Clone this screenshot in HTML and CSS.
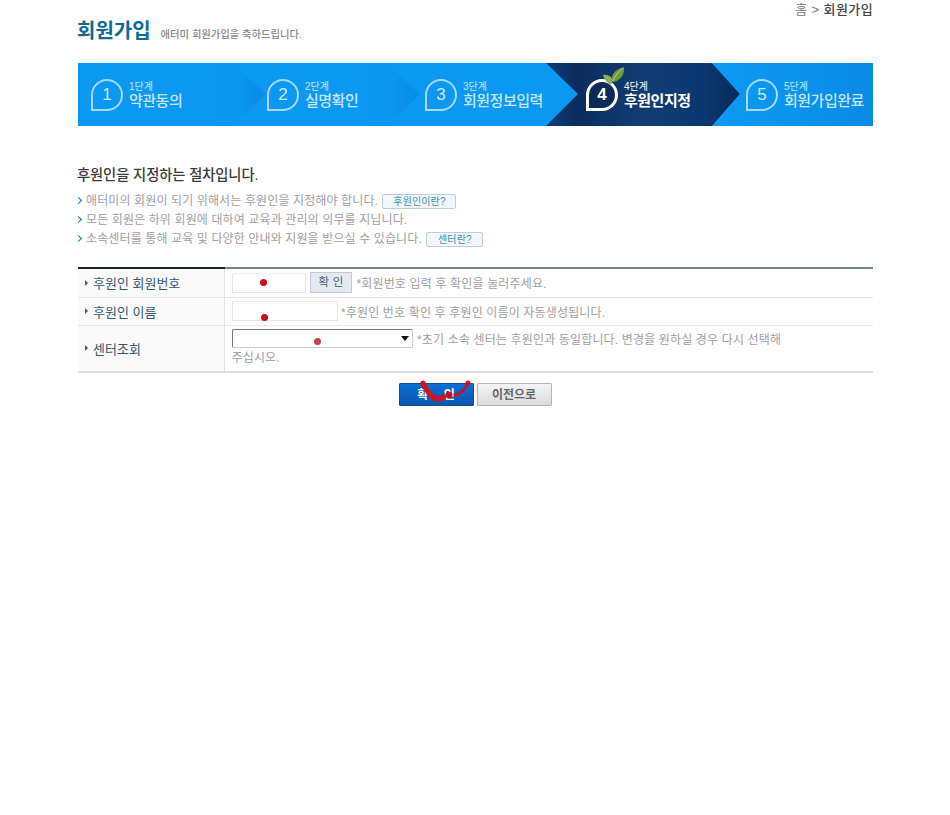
FILE: index.html
```html
<!DOCTYPE html>
<html lang="ko">
<head>
<meta charset="utf-8">
<title>회원가입</title>
<link rel="stylesheet" href="styles.css">
</head>
<body>
<div class="page">
  <div class="crumb">홈 &gt; <b>회원가입</b></div>
  <div class="title-row">
    <h1>회원가입</h1>
    <span class="subtitle">애터미 회원가입을 축하드립니다.</span>
  </div>

  <div class="steps">
    <svg class="steps-bg" viewBox="0 0 795 63" preserveAspectRatio="none">
      <defs>
        <linearGradient id="g1" x1="0" x2="1" y1="0" y2="0">
          <stop offset="0" stop-color="#0a98f2"/>
          <stop offset="0.6" stop-color="#0a96f0"/>
          <stop offset="1" stop-color="#0a8ae2"/>
        </linearGradient>
        <linearGradient id="g4" x1="0" x2="1" y1="0" y2="0">
          <stop offset="0" stop-color="#0e3f7e"/>
          <stop offset="0.15" stop-color="#0b2c5c"/>
          <stop offset="0.5" stop-color="#123d74"/>
          <stop offset="0.8" stop-color="#0a3870"/>
          <stop offset="1" stop-color="#0a2a5a"/>
        </linearGradient>
        <linearGradient id="g5" x1="0" x2="1" y1="0" y2="0">
          <stop offset="0" stop-color="#0b9af4"/>
          <stop offset="1" stop-color="#0a8be6"/>
        </linearGradient>
      </defs>
      <rect width="795" height="63" fill="#0a98f2"/>
      <polygon points="153,0 188,31 153,63 120,63 120,0" fill="url(#g1)"/>
      <polygon points="308,0 342,31 308,63 270,63 270,0" fill="url(#g1)"/>
      <polygon points="468,0 500,31 468,63 660,63 634,63 662,31 634,0" fill="url(#g4)"/>
      <polygon points="634,0 662,31 634,63 795,63 795,0" fill="url(#g5)"/>
    </svg>

    <div class="step">
      <span class="circle">1</span>
      <span class="step-text"><small>1단계</small><strong>약관동의</strong></span>
    </div>
    <div class="step">
      <span class="circle">2</span>
      <span class="step-text"><small>2단계</small><strong>실명확인</strong></span>
    </div>
    <div class="step">
      <span class="circle">3</span>
      <span class="step-text"><small>3단계</small><strong>회원정보입력</strong></span>
    </div>
    <div class="step step-on">
      <svg class="leaf" viewBox="0 0 24 20">
        <path d="M9 19C5 17 2 13 1 9c4-1 8 1 10 5z" fill="#8cae5a"/>
        <path d="M10 15C9 9 13 3 22 1c1 7-3 13-10 15z" fill="#6f9a3f"/>
        <path d="M11 15c2-5 5-9 10-13" fill="none" stroke="#b6d08a" stroke-width="1"/>
      </svg>
      <span class="circle">4</span>
      <span class="step-text"><small>4단계</small><strong>후원인지정</strong></span>
    </div>
    <div class="step">
      <span class="circle">5</span>
      <span class="step-text"><small>5단계</small><strong>회원가입완료</strong></span>
    </div>
  </div>

  <h2>후원인을 지정하는 절차입니다.</h2>
  <ul class="notes">
    <li>애터미의 회원이 되기 위해서는 후원인을 지정해야 합니다. <a class="tag tag-wide">후원인이란?</a></li>
    <li>모든 회원은 하위 회원에 대하여 교육과 관리의 의무를 지닙니다.</li>
    <li>소속센터를 통해 교육 및 다양한 안내와 지원을 받으실 수 있습니다. <a class="tag">센터란?</a></li>
  </ul>

  <table class="form">
    <tr class="row-a">
      <th>후원인 회원번호</th>
      <td>
        <span class="field field-short"><i class="dot"></i></span>
        <span class="check">확 인</span>
        <span class="hint">*회원번호 입력 후 확인을 눌러주세요.</span>
      </td>
    </tr>
    <tr class="row-a">
      <th>후원인 이름</th>
      <td>
        <span class="field field-long"><i class="dot dot-low"></i></span>
        <span class="hint">*후원인 번호 확인 후 후원인 이름이 자동생성됩니다.</span>
      </td>
    </tr>
    <tr class="row-b">
      <th>센터조회</th>
      <td>
        <span class="select"><i class="dot dot-sel"></i><i class="caret"></i></span>
        <span class="hint">*초기 소속 센터는 후원인과 동일합니다. 변경을 원하실 경우 다시 선택해<br>주십시오.</span>
      </td>
    </tr>
  </table>

  <div class="actions">
    <span class="btn btn-primary">확 인
      <svg class="scribble" viewBox="0 0 75 30">
        <path d="M24 3c3 7 7 13 13 16 3 1 5 0 7-2" fill="none" stroke="#d8101c" stroke-width="5" stroke-linecap="round"/>
        <path d="M56 15c5-1 10-5 13-12" fill="none" stroke="#c8141f" stroke-width="3" stroke-linecap="round"/>
        <circle cx="69" cy="3" r="2.5" fill="#d8101c"/>
        <circle cx="50" cy="15" r="3.5" fill="#c8101c"/>
      </svg>
    </span>
    <span class="btn btn-grey">이전으로</span>
  </div>
</div>
</body>
</html>
```
FILE: styles.css
```css
* { box-sizing: border-box; }
html, body { margin: 0; padding: 0; background: #fff; }
body {
  height: 815px;
  overflow: hidden;
  font-family: "Liberation Sans", "Noto Sans CJK KR", sans-serif;
  font-size: 12px;
  color: #8a8a8a;
}
.page { width: 795px; margin-left: 78px; padding-top: 2px; }

.crumb { height: 14px; line-height: 15px; text-align: right; font-size: 13px; letter-spacing: 0.4px; color: #777; }
.crumb b { font-weight: 500; color: #444; }

.title-row { display: flex; align-items: baseline; height: 30px; }
h1 { margin: 0 0 0 -1px; font-size: 20px; line-height: 30px; font-weight: 700; color: #0e6a97; letter-spacing: 0; }
.subtitle { margin-left: 10px; font-size: 10.3px; font-weight: 500; color: #888; }

.steps {
  position: relative;
  display: grid;
  grid-template-columns: 176px 158px 161px 160px 140px;
  height: 63px;
  margin-top: 17px;
  color: #c4e6fc;
}
.steps-bg { position: absolute; inset: 0; width: 100%; height: 100%; }
.step { position: relative; display: flex; align-items: center; gap: 6px; padding-left: 13px; }
.circle {
  flex: none;
  display: flex;
  align-items: center;
  justify-content: center;
  width: 32px;
  height: 32px;
  border: 2px solid #a9d8fa;
  border-radius: 50% 50% 50% 0;
  font-size: 17px;
  color: #cfeafd;
}
.step-text { display: flex; flex-direction: column; }
.step-text small { font-size: 10px; line-height: 11px; }
.step-text strong { font-size: 15px; line-height: 17px; font-weight: 500; letter-spacing: -0.5px; }
.step-on .circle { border: 3px solid #fff; background: #0b2a58; color: #fff; font-weight: 700; }
.step-on .step-text { color: #fff; }
.step-on strong { font-weight: 700; }
.leaf { position: absolute; left: 29px; top: 3px; width: 24px; height: 20px; }

h2 { margin: 39px 0 0 -1px; font-size: 14.3px; line-height: 20px; font-weight: 500; color: #3a3a3a; letter-spacing: -0.1px; }

.notes { list-style: none; margin: 7px 0 0; padding: 0; }
.notes li {
  position: relative;
  height: 19px;
  line-height: 19px;
  padding-left: 8px;
  font-size: 12px;
  color: #a0a0a0;
  letter-spacing: 0.12px;
}
.notes li::before {
  content: "";
  position: absolute;
  left: -2px;
  top: 6px;
  width: 4px;
  height: 4px;
  border-top: 1.5px solid #0f7fa8;
  border-right: 1.5px solid #0f7fa8;
  transform: rotate(45deg);
}
.tag {
  display: inline-block;
  width: 74px;
  height: 15px;
  margin-left: 1px;
  line-height: 13px;
  text-align: center;
  vertical-align: middle;
  font-size: 10px;
  color: #3f93ad;
  background: #f0f8fc;
  border: 1px solid #b9cfdb;
  border-radius: 2px;
}
.tag:not(.tag-wide) { width: 57px; }

.form {
  width: 100%;
  margin-top: 18px;
  border-collapse: collapse;
  table-layout: fixed;
  border-bottom: 2px solid #dcdcdc;
}
.form th {
  position: relative;
  width: 146px;
  padding: 0 0 0 15px;
  text-align: left;
  font-size: 13px;
  font-weight: 400;
  color: #33586e;
  background: #fafafa;
  border-top: 1px solid #e6e6e6;
  border-right: 1px solid #dfe3e6;
}
.form th::before {
  content: "";
  position: absolute;
  left: 7px;
  top: 50%;
  margin-top: -3px;
  border-left: 3px solid #557;
  border-top: 3px solid transparent;
  border-bottom: 3px solid transparent;
}
.form td { position: relative; padding: 0 0 0 7px; border-top: 1px solid #e6e6e6; font-size: 12px; color: #a0a0a0; letter-spacing: 0.15px; }
.form tr:first-child th { border-top: 2px solid #16242e; }
.form tr:first-child td { border-top: 2px solid #76878f; }
.row-a { height: 28px; }
.row-a:first-child { height: 29px; }
.row-b { height: 47px; }

.field { position: relative; display: inline-block; height: 20px; vertical-align: middle; border: 1px solid #e6e6e6; border-top-color: #f2f2f2; background: #fff; }
.field-short { width: 74px; }
.field-long { width: 106px; }
.check {
  display: inline-block;
  width: 42px;
  height: 21px;
  margin: 0 1px;
  line-height: 19px;
  text-align: center;
  vertical-align: middle;
  font-size: 11.5px;
  color: #4f5f6f;
  background: #e4e9f4;
  border: 1px solid #c3cbd6;
}
.hint { vertical-align: middle; }
.row-b td { line-height: 18px; padding-top: 5px; vertical-align: top; }
.select {
  position: relative;
  display: inline-block;
  width: 181px;
  height: 19px;
  margin: -2px 1px 0 0;
  vertical-align: top;
  background: #fff;
  border: 1px solid #777;
  border-right-color: #ccc;
  border-bottom-color: #ccc;
  border-radius: 2px;
}
.row-b .hint { vertical-align: baseline; }
.caret {
  position: absolute;
  right: 3px;
  top: 6px;
  border-top: 5px solid #111;
  border-left: 4px solid transparent;
  border-right: 4px solid transparent;
}
.dot {
  position: absolute;
  left: 27px;
  top: 5px;
  width: 7px;
  height: 7px;
  border-radius: 50%;
  background: #c8101c;
}
.dot-low { left: 28px; top: 12px; }
.dot-sel { left: 81px; top: 8px; width: 7px; height: 7px; background: #c9404a; }

.actions { display: flex; justify-content: center; gap: 3px; margin-top: 10px; padding-right: 1px; }
.btn {
  position: relative;
  display: block;
  width: 75px;
  height: 23px;
  line-height: 22px;
  text-align: center;
  font-size: 12px;
  font-weight: 700;
  border-radius: 1px;
}
.btn-primary { color: #fff; word-spacing: 12px; background: linear-gradient(#0d6fd4, #0757ad); border: 1px solid #0a4f9a; }
.btn-grey { color: #666; background: linear-gradient(#f4f4f4, #dcdcdc); border: 1px solid #b5b5b5; }
.scribble { position: absolute; left: -1px; top: -4px; width: 75px; height: 30px; overflow: visible; }
```
